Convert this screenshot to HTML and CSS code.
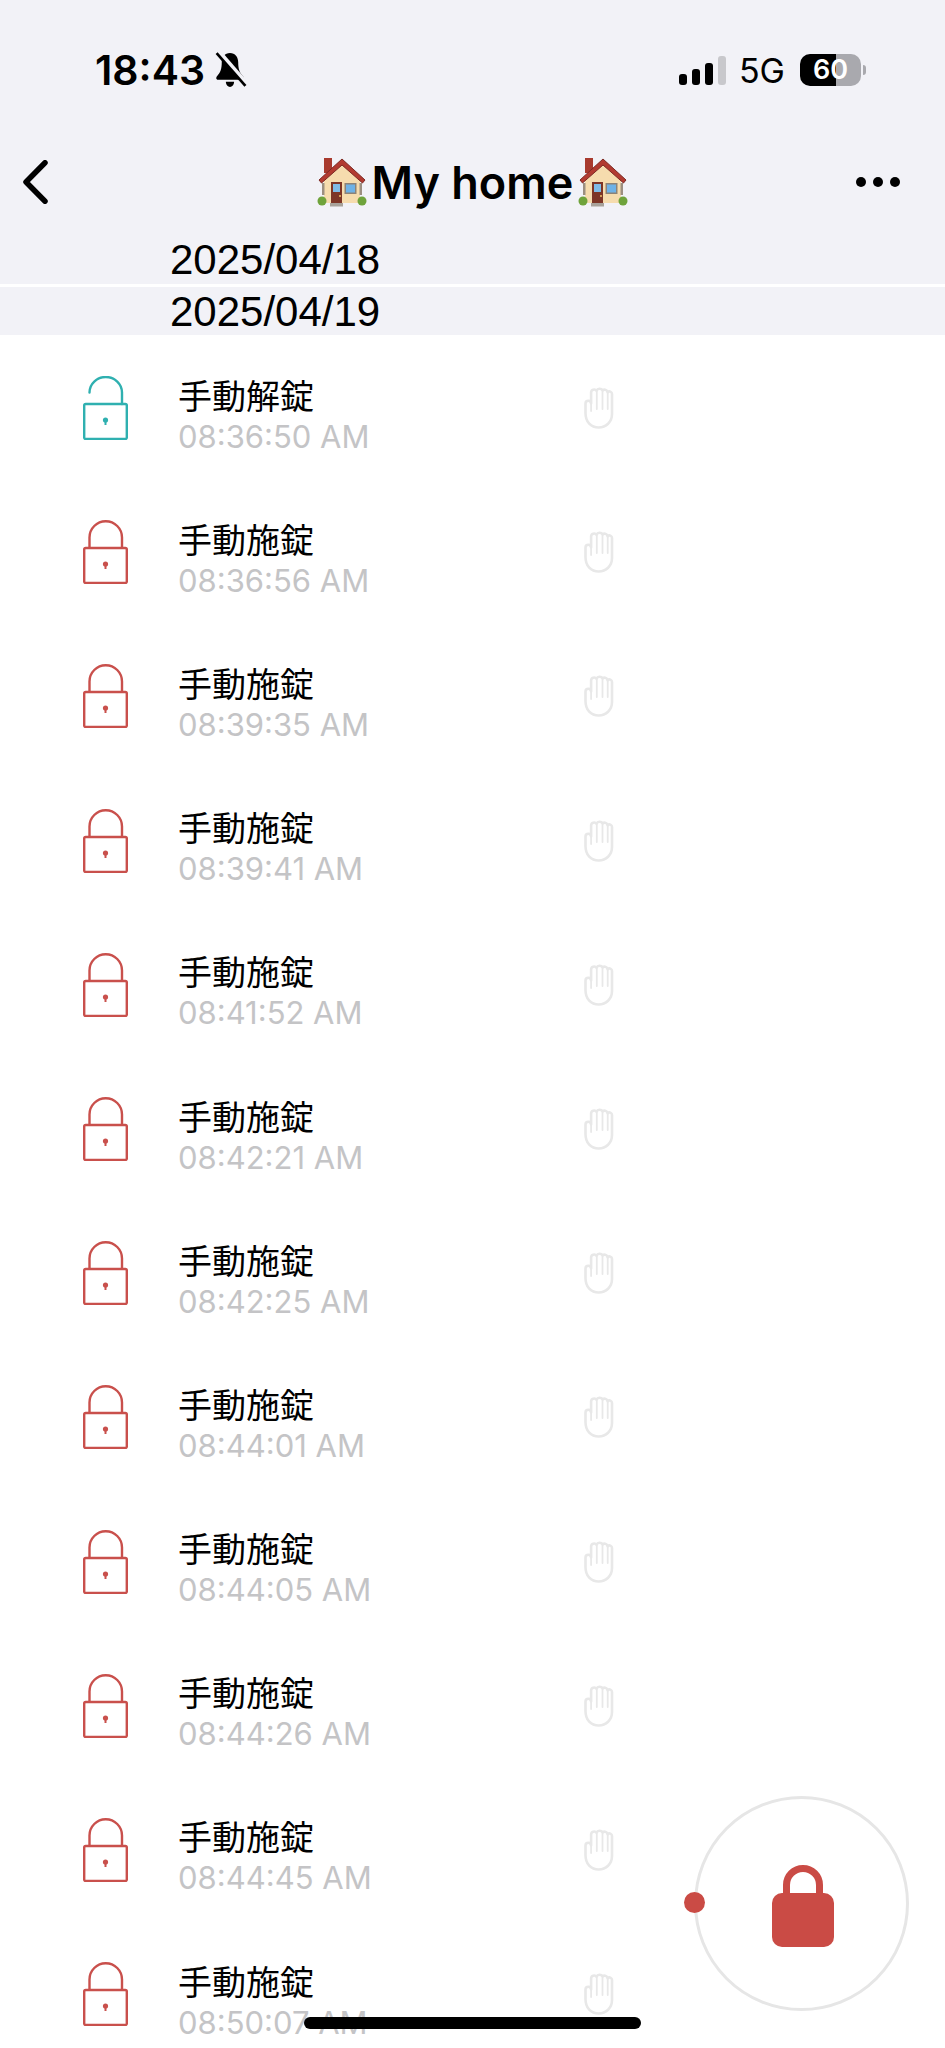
FILE: index.html
```html
<!DOCTYPE html>
<html lang="ja">
<head>
    <meta charset="UTF-8">
    <meta name="viewport" content="width=device-width, initial-scale=1.0">
    <title>My home</title>
    <link rel="stylesheet" href="styles.css">
</head>
<body>
    <svg class="defs" width="0" height="0">
        <symbol id="lock-closed" viewBox="0 0 45 64">
            <path d="M6.500 28V17.500a16.250 16.250 0 0 1 32.500 0V28" fill="none" stroke="currentColor" stroke-width="2.400"/>
            <rect x="1.200" y="28" width="42.600" height="35" rx="1.500" fill="none" stroke="currentColor" stroke-width="2.400"/>
            <circle cx="22.500" cy="44" r="2.600" fill="currentColor"/>
            <path d="M22.500 44v5" stroke="currentColor" stroke-width="2"/>
        </symbol>
        <symbol id="lock-open" viewBox="0 0 45 64">
            <path d="M6.500 16.500a16.250 15.500 0 0 1 32.500 0V28" fill="none" stroke="currentColor" stroke-width="2.400" stroke-linecap="round"/>
            <rect x="1.200" y="28" width="42.600" height="35" rx="1.500" fill="none" stroke="currentColor" stroke-width="2.400"/>
            <circle cx="22.500" cy="44" r="2.600" fill="currentColor"/>
            <path d="M22.500 44v5" stroke="currentColor" stroke-width="2"/>
        </symbol>
        <symbol id="hand" viewBox="0 0 30 42">
            <path d="M1.500 26V16.500a2.800 2.800 0 0 1 5.600 0V5.500a3 3 0 0 1 5.400-1.800a3.400 3.400 0 0 1 6.100-.2a3 3 0 0 1 5 1.800a2.500 2.500 0 0 1 4.400 1.700V27C28 35 22 40.500 14.700 40.500C7 40.500 1.500 35 1.500 26Z" fill="none" stroke="currentColor" stroke-width="2.600" stroke-linejoin="round"/>
            <path d="M7.100 14V24M12.800 4V22M18.500 3.500V22M23.700 5V22" fill="none" stroke="currentColor" stroke-width="1.800" stroke-linecap="round"/>
        </symbol>
        <symbol id="house" viewBox="0 0 50 50">
            <rect x="7" y="1" width="8" height="15" fill="#a83a2e"/>
            <path d="M25 7 43 23V46H7V23Z" fill="#f6dcae"/>
            <path d="M2 23 25 2 48 23 45.500 26 25 8 4.500 26Z" fill="#b23a30" stroke="#7d2a24" stroke-width="1"/>
            <rect x="5" y="26" width="2.500" height="12" fill="#9c8f80"/>
            <rect x="42.500" y="26" width="2.500" height="12" fill="#9c8f80"/>
            <rect x="14" y="25" width="11" height="21" fill="#7d3526"/>
            <rect x="16" y="27" width="7" height="8" fill="#7fbbe6"/>
            <circle cx="23" cy="39" r="1" fill="#f0c36a"/>
            <rect x="27.500" y="26" width="12" height="11" fill="#8d8377"/>
            <rect x="29" y="27.500" width="9" height="8" fill="#6fb2e6"/>
            <rect x="13" y="46" width="13" height="3.500" fill="#a8a29a"/>
            <circle cx="5" cy="44" r="4.500" fill="#6fa33b"/>
            <circle cx="45" cy="44" r="4.500" fill="#6fa33b"/>
        </symbol>
    </svg>

    <div class="app">
        <div class="status-bar">
            <div class="status-left">
                <span class="clock">18:43</span>
                <svg class="bell" viewBox="0 0 31 35">
                    <path d="M15 1c-5 0-8 4-8 9 0 6-1 10-5 14-1 2 0 3 2 3h22c2 0 3-1 2-3-4-4-5-8-5-14 0-5-3-9-8-9Z" fill="#000"/>
                    <path d="M11 29h8c0 3-2 5-4 5s-4-2-4-5Z" fill="#000"/>
                    <path d="M4 0 30 30" stroke="#f2f2f7" stroke-width="5"/>
                    <path d="M2 1 30 33" stroke="#000" stroke-width="2.600"/>
                </svg>
            </div>
            <div class="status-right">
                <div class="signal">
                    <i class="bar bar-1"></i>
                    <i class="bar bar-2"></i>
                    <i class="bar bar-3"></i>
                    <i class="bar bar-4"></i>
                </div>
                <span class="network">5G</span>
                <div class="battery"><span>60</span></div>
                <i class="battery-nub"></i>
            </div>
        </div>

        <div class="nav">
            <svg class="back" viewBox="0 0 25 44">
                <path d="M22 2.800 3 22 22 41.200" fill="none" stroke="#000" stroke-width="5.500" stroke-linecap="round" stroke-linejoin="round"/>
            </svg>
            <h1 class="title">
                <svg class="house"><use href="#house"/></svg>
                <span>My home</span>
                <svg class="house"><use href="#house"/></svg>
            </h1>
            <div class="more"><i></i><i></i><i></i></div>
        </div>

        <div class="date">2025/04/18</div>
        <div class="date">2025/04/19</div>

        <div class="list">
            <div class="row">
                <svg class="lock open"><use href="#lock-open"/></svg>
                <div class="info"><p class="action">手動解錠</p><p class="time">08:36:50 AM</p></div>
                <svg class="hand"><use href="#hand"/></svg>
            </div>
            <div class="row">
                <svg class="lock"><use href="#lock-closed"/></svg>
                <div class="info"><p class="action">手動施錠</p><p class="time">08:36:56 AM</p></div>
                <svg class="hand"><use href="#hand"/></svg>
            </div>
            <div class="row">
                <svg class="lock"><use href="#lock-closed"/></svg>
                <div class="info"><p class="action">手動施錠</p><p class="time">08:39:35 AM</p></div>
                <svg class="hand"><use href="#hand"/></svg>
            </div>
            <div class="row">
                <svg class="lock"><use href="#lock-closed"/></svg>
                <div class="info"><p class="action">手動施錠</p><p class="time">08:39:41 AM</p></div>
                <svg class="hand"><use href="#hand"/></svg>
            </div>
            <div class="row">
                <svg class="lock"><use href="#lock-closed"/></svg>
                <div class="info"><p class="action">手動施錠</p><p class="time">08:41:52 AM</p></div>
                <svg class="hand"><use href="#hand"/></svg>
            </div>
            <div class="row">
                <svg class="lock"><use href="#lock-closed"/></svg>
                <div class="info"><p class="action">手動施錠</p><p class="time">08:42:21 AM</p></div>
                <svg class="hand"><use href="#hand"/></svg>
            </div>
            <div class="row">
                <svg class="lock"><use href="#lock-closed"/></svg>
                <div class="info"><p class="action">手動施錠</p><p class="time">08:42:25 AM</p></div>
                <svg class="hand"><use href="#hand"/></svg>
            </div>
            <div class="row">
                <svg class="lock"><use href="#lock-closed"/></svg>
                <div class="info"><p class="action">手動施錠</p><p class="time">08:44:01 AM</p></div>
                <svg class="hand"><use href="#hand"/></svg>
            </div>
            <div class="row">
                <svg class="lock"><use href="#lock-closed"/></svg>
                <div class="info"><p class="action">手動施錠</p><p class="time">08:44:05 AM</p></div>
                <svg class="hand"><use href="#hand"/></svg>
            </div>
            <div class="row">
                <svg class="lock"><use href="#lock-closed"/></svg>
                <div class="info"><p class="action">手動施錠</p><p class="time">08:44:26 AM</p></div>
                <svg class="hand"><use href="#hand"/></svg>
            </div>
            <div class="row">
                <svg class="lock"><use href="#lock-closed"/></svg>
                <div class="info"><p class="action">手動施錠</p><p class="time">08:44:45 AM</p></div>
                <svg class="hand"><use href="#hand"/></svg>
            </div>
            <div class="row">
                <svg class="lock"><use href="#lock-closed"/></svg>
                <div class="info"><p class="action">手動施錠</p><p class="time">08:50:07 AM</p></div>
                <svg class="hand"><use href="#hand"/></svg>
            </div>
        </div>

        <div class="lock-button">
            <i class="lock-dot"></i>
            <svg class="lock-big" viewBox="0 0 62 82">
                <path d="M14.500 36V20a16.500 16.500 0 0 1 33 0V36" fill="none" stroke="#ca4b45" stroke-width="7"/>
                <rect x="0" y="28" width="62" height="54" rx="10" fill="#ca4b45"/>
            </svg>
        </div>
        <div class="home-bar"></div>
    </div>
</body>
</html>
```

FILE: styles.css
```css
* {
    margin: 0;
    padding: 0;
    box-sizing: border-box;
}

html, body {
    height: 2048px;
    overflow: hidden;
}

body {
    font-family: 'Inter', 'Liberation Sans', sans-serif;
    background: #fff;
    color: #000;
}

.defs {
    position: absolute;
}

.app {
    position: relative;
    height: 2048px;
    overflow: hidden;
}

/* status bar */
.status-bar {
    height: 140px;
    background: #f2f2f7;
    display: flex;
    justify-content: space-between;
    align-items: center;
    padding: 0 79px 0 95px;
}

.status-left, .status-right {
    display: flex;
    align-items: center;
}

.clock {
    font-size: 41px;
    font-weight: 600;
}

.bell {
    width: 33px;
    height: 36px;
    margin-left: 9px;
}

.signal {
    display: flex;
    align-items: flex-end;
    gap: 5px;
    height: 29px;
}

.bar {
    width: 8px;
    background: #000;
    border-radius: 3px;
}

.bar-1 { height: 11px; }
.bar-2 { height: 16px; }
.bar-3 { height: 22px; }
.bar-4 { height: 29px; background: #c8c8cc; }

.network {
    font-size: 34px;
    margin: 0 15px 0 13px;
}

.battery {
    width: 61px;
    height: 32px;
    border-radius: 10px;
    background: linear-gradient(90deg, #000 59%, #a9a9ae 59%);
    color: #fff;
    font-size: 27px;
    font-weight: 600;
    text-align: center;
    line-height: 32px;
}

.battery-nub {
    width: 3px;
    height: 10px;
    margin-left: 2px;
    border-radius: 0 3px 3px 0;
    background: #a9a9ae;
}

/* nav */
.nav {
    height: 96px;
    padding: 0 45px 12px;
    background: #f2f2f7;
    display: grid;
    grid-template-columns: 1fr auto 1fr;
    align-items: center;
}

.back {
    width: 25px;
    height: 44px;
    margin-left: -22px;
}

.title {
    display: flex;
    align-items: center;
    gap: 5px;
    font-size: 45px;
    font-weight: 600;
}

.house {
    width: 50px;
    height: 50px;
}

.more {
    display: flex;
    justify-content: flex-end;
    gap: 7px;
}

.more i {
    width: 10px;
    height: 10px;
    border-radius: 50%;
    background: #000;
}

/* dates */
.date {
    height: 48px;
    line-height: 48px;
    padding-left: 170px;
    background: #f2f2f7;
    font-size: 42px;
    font-family: 'Liberation Sans', sans-serif;
}

.date + .date {
    margin-top: 3px;
    line-height: 50px;
}

/* list */
.list {
    padding-top: 1px;
}

.row {
    height: 144.2px;
    display: flex;
    align-items: center;
    padding-left: 83px;
}

.lock {
    width: 45px;
    height: 64px;
    color: #c9504c;
}

.lock.open {
    color: #2fb0b0;
}

.info {
    width: 406px;
    margin-left: 50px;
    margin-top: 13px;
}

.action {
    font-family: 'Noto Sans CJK TC', 'Noto Sans CJK JP', sans-serif;
    font-size: 34px;
    line-height: 44px;
}

.time {
    font-size: 31px;
    line-height: 40px;
    color: #c4c4c6;
}

.hand {
    width: 30px;
    height: 42px;
    color: #e8e8e8;
}

/* lock button over the list */
.lock-button {
    position: absolute;
    left: 694px;
    top: 1796px;
    width: 215px;
    height: 215px;
    border: 3px solid #e6e6e6;
    border-radius: 50%;
    background: #fff;
    display: flex;
    justify-content: center;
    align-items: center;
}

.lock-big {
    width: 62px;
    height: 82px;
    margin-left: 3px;
    margin-bottom: -4px;
}

.lock-dot {
    position: absolute;
    left: -13px;
    top: 93px;
    width: 21px;
    height: 21px;
    border-radius: 50%;
    background: #ca4b45;
}

.home-bar {
    position: absolute;
    left: 304px;
    top: 2017px;
    width: 337px;
    height: 12px;
    border-radius: 6px;
    background: #000;
}
```
